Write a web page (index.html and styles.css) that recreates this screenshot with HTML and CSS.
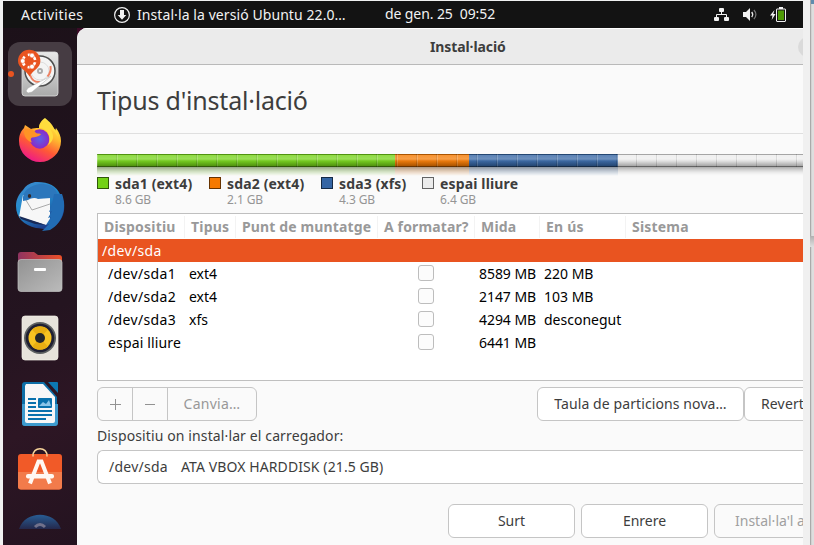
FILE: index.html
```
<!DOCTYPE html>
<html lang="en">
<head>
<meta charset="utf-8">
<title>Instal·lació</title>
<link rel="stylesheet" href="styles.css">
</head>
<body>
<div class="screen">
  <header class="topbar">
    <span class="activities">Activities</span>
    <svg class="dl" width="18" height="18" viewBox="0 0 18 18"><circle cx="9" cy="9" r="7.4" fill="none" stroke="#f2f2f2" stroke-width="1.2"/><path d="M7 4h4v5h2.3L9 13.8 4.700 9H7z" fill="#f2f2f2"/></svg>
    <span class="appname">Instal·la la versió Ubuntu 22.0…</span>
    <span class="clock">de gen. 25 &nbsp;09:52</span>
    <div class="tray">
      <svg width="16" height="16" viewBox="0 0 16 16" fill="#f2f2f2"><rect x="5" y="1" width="5" height="4" rx="1"/><rect x="0" y="10" width="5" height="4" rx="1"/><rect x="10" y="10" width="5" height="4" rx="1"/><path d="M2.500 10V7.500h10V10M7.500 5v2.500" fill="none" stroke="#f2f2f2"/></svg>
      <svg width="16" height="16" viewBox="0 0 16 16"><path d="M1 5h3l4-4v13l-4-4H1z" fill="#f2f2f2"/><path d="M9.700 5q2 2.500 0 5" fill="none" stroke="#eee" stroke-width="1.300"/><path d="M11.900 3q4 4.500 0 9" fill="none" stroke="#777" stroke-width="1.200"/></svg>
      <svg width="18" height="16" viewBox="0 0 18 16"><path d="M4.500 3L0 8.500h2.500L1.700 13 5.500 7H3.300z" fill="#f2f2f2"/><path d="M9 1.500V0h4v1.500h2l1 1v11.500l-1 1H7l-1-1V2.500l1-1z" fill="#f2f2f2"/><rect x="7" y="2.500" width="8" height="11.500" fill="#171717"/><rect x="8" y="3.500" width="6" height="9.500" fill="#4e9a06"/></svg>
    </div>
  </header>
  <div class="desktop">
    <nav class="dock">
      <div class="tile active"><i class="running"></i>
        <svg width="64" height="64" viewBox="0 0 64 64"><defs><linearGradient id="disk" x2="0" y2="1"><stop stop-color="#e8e8e8"/><stop offset="1" stop-color="#aaa"/></linearGradient></defs><rect x="14" y="10" width="36" height="44" rx="3" fill="url(#disk)" stroke="#ddd" stroke-width=".8"/><circle cx="32" cy="29" r="15" fill="#f4f4f4" stroke="#4d4d4d" stroke-width="1.500"/><circle cx="32" cy="29" r="9" fill="none" stroke="#ddd"/><circle cx="32" cy="29" r="3" fill="#aaa"/><circle cx="32" cy="29" r="1" fill="#fff"/><path d="M42.500 24q1 6-3 10.500M22 33q3 8 10 7" fill="none" stroke="#ef8061" stroke-width="2"/><path d="M43 34L24 50l-4 1-2-2 2-3z" fill="#fff" stroke="#aaa" stroke-width=".5"/><path d="M21.500 34.500C18 28 10 26 10 19a11.200 11.200 0 0 1 22.400 0c0 7-7.400 9-10.900 15.500z" fill="#e95420"/><circle cx="21" cy="19" r="6.200" fill="none" stroke="#fff" stroke-width="2.600" stroke-dasharray="9.600 3.390" transform="rotate(12 21 19)"/><g fill="#fff" stroke="#e95420" stroke-width=".6"><circle cx="14.700" cy="19" r="2.400"/><circle cx="24" cy="13.500" r="2.400"/><circle cx="24" cy="24.700" r="2.400"/></g></svg>
      </div>
      <div class="tile">
        <svg width="64" height="64" viewBox="0 0 64 64"><defs><linearGradient id="fox" x1=".8" x2=".3" y2="1"><stop stop-color="#fff44f"/><stop offset=".35" stop-color="#ffbd2f"/><stop offset=".65" stop-color="#ff5a35"/><stop offset="1" stop-color="#ed168c"/></linearGradient><radialGradient id="globe"><stop stop-color="#5b62e8"/><stop offset="1" stop-color="#8c29c5"/></radialGradient></defs><path d="M37 10c5 4 8 7 10 13l1-3c3 4 5 8 5 13a21 21 0 0 1-42 0c0-6 2-10 5-13l1-3c2 1 4 3 6 4 2-1 5-1 8-1 0-5 3-8 6-10z" fill="url(#fox)"/><circle cx="31.700" cy="31" r="9.700" fill="url(#globe)"/><path d="M17 21c5-1 9 0 11 4 2 1 4 0 5 1.500-3 2.500-6 2.500-9 3-2 1-1 3 0 5-5-2-8-6-8-11z" fill="#ff9425"/><path d="M31 20c9 0 13 10 9 17 7-5 6-11 2-16 4 1 7 5 8 9 0-9-8-13-13-18-4 3-6 4-6 8z" fill="#ffdc3d"/></svg>
      </div>
      <div class="tile">
        <svg width="64" height="64" viewBox="0 0 64 64"><defs><linearGradient id="bird" x2=".6" y2="1"><stop stop-color="#3e86ca"/><stop offset=".5" stop-color="#238dcf"/><stop offset="1" stop-color="#1c3482"/></linearGradient></defs><path d="M27 8q19-1 25 12l4 8c1 10-1 17-8 23l-8 5c-4-1-8-2-12-2C16 51 8 44 8 32c0-7 3-12 7-16q3-6 12-8z" fill="url(#bird)"/><path d="M15 21l27 2v25l-4 3-27-8z" fill="#f7f7f7"/><path d="M16 23l8 13 18-6" fill="none" stroke="#aaa"/><path d="M15 23c1-9 14-14 21-13 11 1 14 8 14 15-6-2-16 0-20 0-3-2-7-1-10 1l-5 1z" fill="#2c77bc"/><path d="M46 20l8 0c5 13 1 29-12 36l-8 1 7-7-3 1 5-8-3 1 4-7-3 1 3-7z" fill="#226cb4"/><path d="M11 42l27 9-11-1-14-5z" fill="#172957"/><ellipse cx="21.500" cy="22" rx="1.700" ry="2" fill="#332829"/></svg>
      </div>
      <div class="tile">
        <svg width="64" height="64" viewBox="0 0 64 64"><defs><linearGradient id="ftop"><stop stop-color="#8f3360"/><stop offset="1" stop-color="#ec5028"/></linearGradient><linearGradient id="ffront" x2="1" y2="1"><stop stop-color="#929292"/><stop offset="1" stop-color="#bbb"/></linearGradient></defs><path d="M10 28V15q0-3 3-3h13l4 3h21q3 0 3 3v12z" fill="url(#ftop)"/><rect x="10" y="19.500" width="44" height="32" rx="3" fill="url(#ffront)" stroke="#c2c2c2" stroke-width=".7"/><rect x="26" y="28" width="12" height="3" rx="1" fill="#fff"/></svg>
      </div>
      <div class="tile">
        <svg width="64" height="64" viewBox="0 0 64 64"><rect x="14" y="10" width="36" height="44" rx="3" fill="#e7e3db" stroke="#f5f2ea" stroke-width=".7"/><circle cx="32" cy="32" r="16" fill="#5d6060"/><circle cx="32" cy="32" r="14.300" fill="#202033"/><circle cx="32" cy="32" r="11.500" fill="#f7c321"/><path d="M24 23.500a11.500 11.500 0 0 1 16 0L32 32zM24 40.500a11.500 11.500 0 0 0 16 0L32 32z" fill="#e8ae12"/><circle cx="32" cy="32" r="5" fill="#24272a"/></svg>
      </div>
      <div class="tile">
        <svg width="64" height="64" viewBox="0 0 64 64"><path d="M17 10h19l13 15v26q0 3-3 3H17q-3 0-3-3V13q0-3 3-3z" fill="#0d6fa7"/><path d="M14 32h36v19q0 3-3 3H17q-3 0-3-3z" fill="#3d9bce"/><path d="M18 12h17l12 13v24q0 2-2 2H19q-2 0-2-2V14z" fill="#f7f7f7"/><path d="M40 10h9q1 0 1 1v10z" fill="#0d78b1"/><path d="M20 27h8M20 31h8M20 35h8M20 39h24M20 43h24M20 47h18" stroke="#0871ad" stroke-width="2"/><rect x="30" y="26" width="14" height="10" rx="1" fill="#0871ad"/><path d="M31 34l4-4 3 2 3-4 2 6z" fill="#8ac5e8"/></svg>
      </div>
      <div class="tile">
        <svg width="64" height="64" viewBox="0 0 64 64"><rect x="10" y="16" width="44" height="35.500" rx="3" fill="#f15a28"/><path d="M10 34h44v14.500q0 3-3 3H13q-3 0-3-3z" fill="#f27b4b"/><path d="M25 18.500c-1-10.500 15-10.500 14 0" fill="none" stroke="#f8d59b" stroke-width="1.500"/><path d="M22 45.500l8.500-22h3l8.500 22" fill="none" stroke="#fff8f2" stroke-width="4"/><rect x="18" y="36" width="28" height="4.500" rx="2" fill="#fff8f2"/></svg>
      </div>
      <div class="tile">
        <svg width="64" height="64" viewBox="0 0 64 64"><defs><linearGradient id="help" x2="0" y2="1"><stop stop-color="#285d94"/><stop offset="1" stop-color="#24284c"/></linearGradient></defs><path d="M11 25C17 6 47 6 53 25z" fill="url(#help)"/><path d="M27 23q5-5 10 0" fill="none" stroke="#71718b" stroke-width="3"/></svg>
      </div>
    </nav>
    <main class="window">
      <div class="titlebar"><b>Instal·lació</b><i class="close"></i></div>
      <h1><span>Tipus d'instal·lació</span></h1>
      <section class="content">
        <div class="disk">
          <div class="bar"><i class="green"></i><i class="orange"></i><i class="blue"></i><i class="free"></i></div>
          <div class="bar reflection"><i class="green"></i><i class="orange"></i><i class="blue"></i><i class="free"></i></div>
        </div>
        <div class="legend">
          <div><i class="green"></i><p><b>sda1 (ext4)</b><small>8.6 GB</small></p></div>
          <div><i class="orange"></i><p><b>sda2 (ext4)</b><small>2.1 GB</small></p></div>
          <div class="xfs"><i class="blue"></i><p><b>sda3 (xfs)</b><small>4.3 GB</small></p></div>
          <div><i class="free"></i><p><b>espai lliure</b><small>6.4 GB</small></p></div>
        </div>
        <div class="table">
          <div class="row head"><span>Dispositiu</span><span>Tipus</span><span class="mount">Punt de muntatge</span><span class="format">A formatar?</span><span>Mida</span><span>En ús</span><span>Sistema</span></div>
          <div class="row selected"><span>/dev/sda</span></div>
          <div class="row"><span class="part">/dev/sda1</span><span>ext4</span><span></span><span><i class="check"></i></span><span class="size">8589 MB</span><span>220 MB</span></div>
          <div class="row"><span class="part">/dev/sda2</span><span>ext4</span><span></span><span><i class="check"></i></span><span class="size">2147 MB</span><span>103 MB</span></div>
          <div class="row"><span class="part">/dev/sda3</span><span>xfs</span><span></span><span><i class="check"></i></span><span class="size">4294 MB</span><span class="unknown">desconegut</span></div>
          <div class="row"><span class="space">espai lliure</span><span></span><span></span><span><i class="check"></i></span><span class="size">6441 MB</span></div>
        </div>
        <div class="actions">
          <div class="group"><span class="icon"><svg width="12" height="12"><path d="M6.500 1v11M1 6.500h11" stroke="#929292"/></svg></span><span class="icon"><svg width="12" height="12"><path d="M1 6.500h10" stroke="#929292"/></svg></span><span class="change">Canvia…</span></div>
          <span class="button new">Taula de particions nova…</span><span class="button revert">Reverteix</span>
        </div>
        <div class="label">Dispositiu on instal·lar el carregador:</div>
        <div class="combo"><span class="dev">/dev/sda</span><span class="ata">ATA VBOX HARDDISK (21.5 GB)</span></div>
        <footer><span class="button">Surt</span><span class="button">Enrere</span><span class="button install">Instal·la'l ara</span></footer>
      </section>
    </main>
  </div>
</div>
<aside class="edge"><i class="corner"></i><i class="notch"></i></aside>
</body>
</html>
```
FILE: styles.css
```
*{box-sizing:border-box}
body{margin:0;width:814px;height:545px;overflow:hidden;display:flex;background:#f0f1f1;padding:1px 0 0 3px;font:14px/22px "Noto Sans",sans-serif;color:#3d3d3d;white-space:nowrap}
svg{display:block;flex:none}
i{display:block;font-style:normal}
.screen{width:800px;height:544px;overflow:hidden;flex:none;background:#3b0b27}
.topbar{height:27px;background:#131313;color:#f2f2f2;display:flex;align-items:center;padding-left:18px}
.activities{width:92px;letter-spacing:.4px}
.dl{margin-right:6px}
.appname{width:248px;letter-spacing:.08px}
.clock{width:330px;letter-spacing:-.1px;position:relative;top:-1px}
.tray{display:flex;gap:12px;margin-left:-1px}
.desktop{display:flex;height:517px}
.dock{width:74px;flex:none;padding:14px 0 0 5px;display:flex;flex-direction:column;gap:2px;overflow:hidden;background:linear-gradient(155deg,#1c1119 0,#241420 55%,#2d1624 75%,#241320)}
.tile{width:64px;height:64px;flex:none;position:relative;border-radius:12px}
.active{background:#463c43}
.running{position:absolute;left:0;top:29px;width:6px;height:6px;border-radius:3px;background:#e95420}
.window{width:726px;flex:none;background:#fafafa;border-radius:10px 0 0;overflow:hidden}
.titlebar{height:37px;background:#ebebeb;border-top:1px solid #fff;border-bottom:1px solid #b9b9b9;position:relative;padding-left:353px;line-height:36px}
.titlebar b{letter-spacing:-.1px}
.close{position:absolute;left:721px;top:8px;width:20px;height:20px;border-radius:50%;background:#dadada}
h1{margin:0;height:69px;border-bottom:1px solid #dfdfdf;padding-left:20px;font-size:25px;line-height:70px;font-weight:400;letter-spacing:-.2px}
.content{padding:20px 0 0 20px}
.disk{height:23px}
.bar{height:13px;display:flex;position:relative}
.bar::after{content:"";position:absolute;inset:0;background:linear-gradient(rgba(0,0,0,.3) 0,rgba(0,0,0,.3) 1px,rgba(255,255,255,.2) 1px,rgba(255,255,255,.28) 5px,rgba(128,128,128,.1) 7px,rgba(0,0,0,.3) 12px,rgba(0,0,0,.58) 12px),repeating-linear-gradient(90deg,rgba(255,255,255,.2) 0 1px,transparent 1px 19px,rgba(0,0,0,.13) 19px 20px)}
.green{background:#73d216}.orange{background:#f57900}.blue{background:#3465a4}.free{background:#ececec}
.bar .green{width:298px}.bar .orange{width:74px}.bar .blue{width:149px}.bar .free{flex:1}
.reflection{height:10px;transform:scaleY(-1);opacity:.48;-webkit-mask-image:linear-gradient(transparent 1px,#000);mask-image:linear-gradient(transparent 1px,#000)}
.reflection::after{background:linear-gradient(transparent,rgba(0,0,0,.65))}
.legend{display:flex;height:36px}
.legend div{display:flex;width:112px;gap:6px}
.legend .xfs{width:101px}
.legend i{width:12px;height:12px;border:1px solid rgba(0,0,0,.58);flex:none}
.legend p{margin:-2px 0 0;display:flex;flex-direction:column;line-height:18px}
.legend b{letter-spacing:.15px}
.legend small{font-size:12px;line-height:14px;color:#959595;letter-spacing:-.1px}
.table{height:168px;border:1px solid #bfbfbf;border-right:0;background:#fff;color:#000}
.row{height:23px;display:grid;grid-template-columns:87px 51px 142px 97px 65px 86px 1fr;align-items:center}
.row span{padding-left:4px}
.row span:first-child{padding-left:10px}
.row .part{letter-spacing:.35px}.row .space{letter-spacing:.15px}
.row .size{padding-left:4px;letter-spacing:-.05px}
.head{height:25px;font-weight:700;color:#999}
.head span,.head span:first-child{padding-left:6px;border-right:1px solid #f3f3f3;letter-spacing:.2px}
.head .mount,.head .format{letter-spacing:.13px}
.head span:last-child{border:0}
.row.selected{background:#e95420;color:#fff}
.row.selected span{padding-left:4px;letter-spacing:.35px}
.check{width:16px;height:16px;border:1px solid #bdbdbd;border-radius:3px;background:#fcfcfc;margin:-2px 0 0 36px}
.actions{display:flex;margin-top:6px;height:34px}
.group,.button,.combo{height:34px;border:1px solid #c5c5c5;border-radius:6px;display:flex}
.group{width:160px;flex:none;color:#989898;margin-right:280px}
.icon{width:35px;border-right:1px solid #c5c5c5;display:flex;align-items:center;justify-content:center}
.change{flex:1;text-align:center;line-height:32px;letter-spacing:.25px}
.button{background:#fff;align-items:center;justify-content:center;flex:none}
.new{width:207px;letter-spacing:.1px}.revert{width:100px;justify-content:flex-start;padding-left:16px;letter-spacing:.15px}
.label{height:29px;line-height:30px;letter-spacing:.12px}
.combo{background:#fff;border-right:0;border-radius:6px 0 0 6px;align-items:center;padding-left:11px}
.dev{width:72px;letter-spacing:.25px}.ata{letter-spacing:.1px}
footer{display:flex;gap:6px;margin:20px 0 0 351px}
footer .button{width:127px}
footer .install{background:#fafafa;color:#a0a0a0;justify-content:flex-start;padding-left:20px}
.edge{margin-top:-1px;width:11px;height:545px;border-left:7px solid #f0f0f0;position:relative;background:linear-gradient(90deg,#aaa 0 1px,#d2d2d2 1px 2px,#dedede 2px)}
.corner{position:absolute;left:1px;top:0;width:3px;height:4px;background:#5f8cae}
.notch{position:absolute;left:0;top:236px;width:4px;height:11px;background:linear-gradient(#b0b0b0,#e0e0e0)}
```
